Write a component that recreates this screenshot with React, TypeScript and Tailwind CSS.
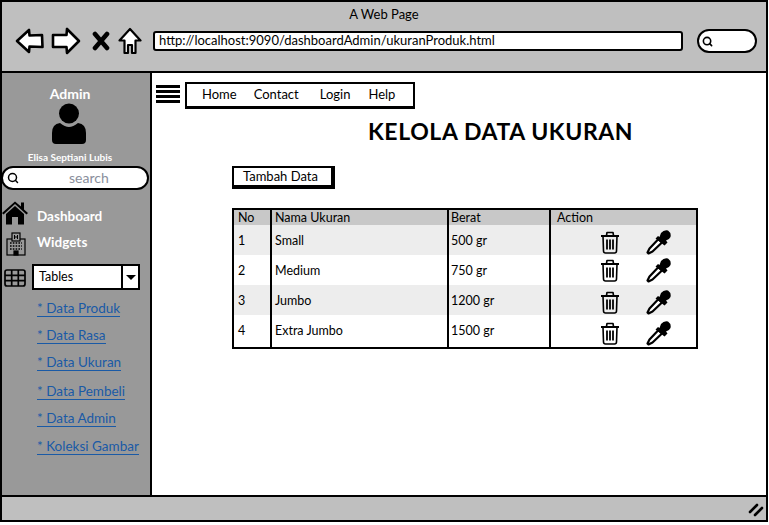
import { Search } from "lucide-react";

const font = { fontFamily: '"Lato", "Noto Sans", sans-serif' };

const rows = [
  { no: "1", name: "Small", weight: "500 gr", iconPad: "pt-[4px]" },
  { no: "2", name: "Medium", weight: "750 gr", iconPad: "pt-0" },
  { no: "3", name: "Jumbo", weight: "1200 gr", iconPad: "pt-[3px]" },
  { no: "4", name: "Extra Jumbo", weight: "1500 gr", iconPad: "pt-[6px]" },
];

const links = [
  { label: "* Data Produk", className: "mt-[10px]" },
  { label: "* Data Rasa", className: "mt-[10px]" },
  { label: "* Data Ukuran", className: "mt-[10px]" },
  { label: "* Data Pembeli", className: "mt-[12px]" },
  { label: "* Data Admin", className: "mt-[10px]" },
  { label: "* Koleksi Gambar", className: "mt-[11px]" },
];

function BackIcon() {
  return (
    <svg width="30" height="26" viewBox="0 0 30 26" fill="white" stroke="black" strokeWidth="2.6" strokeLinejoin="round">
      <path d="M2 13 L14 2 L14.500 7.500 L27 7 L27.500 19 L14.500 18.500 L14 24 Z" />
    </svg>
  );
}

function ForwardIcon() {
  return (
    <svg width="30" height="28" viewBox="0 0 30 28" fill="white" stroke="black" strokeWidth="2.600" strokeLinejoin="round">
      <path d="M28 14 L16 2 L15.500 8 L2 8 L2 20 L15.500 20 L16 26 Z" />
    </svg>
  );
}

function StopIcon() {
  return (
    <svg width="18" height="20" viewBox="0 0 18 20" fill="none" stroke="black" strokeWidth="4.600" strokeLinecap="round">
      <path d="M3 3 L15 17 M15 3 L3 17" />
    </svg>
  );
}

function HomeOutline() {
  return (
    <svg width="24" height="28" viewBox="0 0 24 28" fill="white" stroke="black" strokeWidth="2.200" strokeLinejoin="round">
      <path d="M12 2 L22.500 13.500 L17.500 13.500 L17.500 26 L14 26 L14 18 L10 18 L10 26 L6.500 26 L6.500 13.500 L1.500 13.500 Z" />
    </svg>
  );
}

function HomeSolid() {
  return (
    <svg width="26" height="24" viewBox="0 0 26 24" fill="black">
      <path d="M13 3 L1.500 13.500 L0 12 L13 0.500 L19 5.500 L19 1.500 L22 1.500 L22 8.500 L26 12 L24.500 13.500 Z" />
      <path d="M13 5 L4 13 L4 23.500 L10 23.500 L10 16 L16 16 L16 23.500 L22 23.500 L22 13 Z" />
    </svg>
  );
}

function HospitalIcon() {
  return (
    <svg width="20" height="24" viewBox="0 0 20 24" fill="none" stroke="black" strokeWidth="1.200">
      <rect x="1" y="7" width="18" height="16" />
      <rect x="6" y="1" width="8" height="8" fill="#999999" />
      <path d="M8.500 3 V7 M11.500 3 V7 M8.500 5 H11.500" strokeWidth="1" />
      <path d="M4 11 H16 M4 14 H16 M4 17 H16" strokeWidth="1.600" strokeDasharray="1.600 1.200" />
      <rect x="8" y="19" width="4" height="4" fill="black" />
    </svg>
  );
}

function GridIcon() {
  return (
    <svg width="22" height="18" viewBox="0 0 22 18" fill="none" stroke="black" strokeWidth="1.700">
      <rect x="1" y="1" width="20" height="16" rx="2" />
      <path d="M1 6.300 H21 M1 11.700 H21 M7.700 1 V17 M14.300 1 V17" />
    </svg>
  );
}

function TrashIcon() {
  return (
    <svg width="20" height="23" viewBox="0 0 20 23" fill="none" stroke="black" strokeWidth="1.600" strokeLinejoin="round">
      <path d="M1 5 H19" strokeWidth="2" />
      <path d="M6.500 4.500 L7 1.500 H13 L13.500 4.500" />
      <path d="M3 5 L3.500 20 Q3.600 22 5.500 22 H14.500 Q16.400 22 16.500 20 L17 5" />
      <path d="M7 8.500 V18.500 M10 8.500 V18.500 M13 8.500 V18.500" strokeWidth="1.800" />
    </svg>
  );
}

function DropperIcon() {
  return (
    <svg width="25" height="25" viewBox="0 0 25 25">
      <path d="M12.500 9 L16 12.500 L6.500 21.500 L2.500 23.500 L1.500 22.500 L3.500 18.500 Z" fill="white" stroke="black" strokeWidth="2.200" strokeLinejoin="round" />
      <path d="M9.500 8.500 L12 6 L13.500 7 L15 3 Q18 -0.500 22 0.500 Q25.500 3 24.500 7 Q23 10 20 10.500 L21.500 12.500 L18.500 15.500 Z" fill="black" />
    </svg>
  );
}

function Avatar() {
  return (
    <svg width="36" height="42" viewBox="0 0 36 42" fill="black">
      <circle cx="18" cy="10.500" r="10" />
      <path d="M9 20 Q14 24 18 24 Q22 24 27 20 Q35 21 35 30 L35 37 Q35 41 31 41 L5 41 Q1 41 1 37 L1 30 Q1 21 9 20 Z" />
    </svg>
  );
}

function Sidebar() {
  return (
    <aside className="flex w-[150px] shrink-0 flex-col border-r-[2px] border-black bg-[#999999]">
      <div className="mt-[12px] pr-[12px] text-center text-[14px] leading-[18px] font-bold text-white">Admin</div>
      <div className="flex justify-center pr-[14px]">
        <Avatar />
      </div>
      <div className="mt-[6px] pr-[12px] text-center text-[10px] leading-[12px] font-bold text-white">Elisa Septiani Lubis</div>
      <div className="-ml-[1px] mt-[3px] flex h-[24px] w-[148px] items-center rounded-full border-[2px] border-black bg-white">
        <Search size={12} strokeWidth={3} className="ml-[4px] text-black" />
        <span className="ml-[50px] text-[14px] leading-none text-[#8a8f9c]">search</span>
      </div>
      <div className="mt-[14px] flex h-[24px] items-center">
        <span className="mb-[7px] flex">
          <HomeSolid />
        </span>
        <span className="ml-[9px] text-[13.500px] font-bold text-white">Dashboard</span>
      </div>
      <div className="mt-[2px] flex h-[24px] items-center">
        <span className="ml-[4px] mt-[3px] flex">
          <HospitalIcon />
        </span>
        <span className="ml-[11px] text-[13.500px] font-bold text-white">Widgets</span>
      </div>
      <div className="mt-[10px] flex items-center">
        <span className="ml-[2px] mt-[2px] flex">
          <GridIcon />
        </span>
        <div className="ml-[6px] flex h-[26px] w-[108px] items-center border-[2px] border-black bg-white pl-[5px] text-[12.500px] text-black">
          <span className="flex-1">Tables</span>
          <span className="flex h-full w-[17px] items-center justify-center border-l-[2px] border-black">
            <span className="h-0 w-0 border-x-[5px] border-t-[5px] border-x-transparent border-t-black" />
          </span>
        </div>
      </div>
      <div className="flex flex-col items-start pl-[35px]">
        {links.map((link) => (
          <a key={link.label} className={`${link.className} border-b border-[#1a5aa6] text-[13.500px] leading-[16px] text-[#1a5aa6]`}>
            {link.label}
          </a>
        ))}
      </div>
    </aside>
  );
}

function DataTable() {
  return (
    <div className="ml-[80px] mt-[19px] w-[466px] border-[2px] border-black text-[12.500px] text-black">
      <div className="grid h-[15px] grid-cols-[38px_177px_102px_1fr] bg-[#c8c8c8] leading-[15px]">
        <div className="border-r-[2px] border-black pl-[4px]">No</div>
        <div className="border-r-[2px] border-black pl-[3px]">Nama Ukuran</div>
        <div className="border-r-[2px] border-black pl-[2px]">Berat</div>
        <div className="pl-[6px]">Action</div>
      </div>
      {rows.map((row, i) => (
        <div key={row.no} className={`grid h-[30px] grid-cols-[38px_177px_102px_1fr] ${i % 2 === 0 ? "bg-[#ededed]" : "bg-white"}`}>
          <div className="border-r-[2px] border-black pl-[4px] leading-[31px]">{row.no}</div>
          <div className="border-r-[2px] border-black pl-[3px] leading-[31px]">{row.name}</div>
          <div className="border-r-[2px] border-black pl-[2px] leading-[31px]">{row.weight}</div>
          <div className={`flex items-center pl-[49px] ${row.iconPad}`}>
            <TrashIcon />
            <span className="ml-[26px] flex">
              <DropperIcon />
            </span>
          </div>
        </div>
      ))}
      <div className="grid h-[2px] grid-cols-[38px_177px_102px_1fr]">
        <div className="border-r-[2px] border-black" />
        <div className="border-r-[2px] border-black" />
        <div className="border-r-[2px] border-black" />
      </div>
    </div>
  );
}

export default function App() {
  return (
    <div className="h-[525px] w-[769px] overflow-hidden bg-white text-black" style={font}>
      <div className="flex h-[522px] w-[768px] flex-col border-[2px] border-black">
        <header className="h-[71px] shrink-0 border-b-[2px] border-black bg-[#bfbfbf]">
          <div className="h-[22px] pt-[3px] text-center text-[13px] leading-[18px]">A Web Page</div>
          <div className="mt-[1px] flex h-[32px] items-center">
            <span className="ml-[13px] flex">
              <BackIcon />
            </span>
            <span className="ml-[6px] flex">
              <ForwardIcon />
            </span>
            <span className="ml-[11px] flex">
              <StopIcon />
            </span>
            <span className="ml-[8px] flex">
              <HomeOutline />
            </span>
            <div className="ml-[11px] flex h-[20px] w-[530px] items-center rounded-[3px] border-[2px] border-black bg-white pl-[4px] text-[13px]">
              http://localhost:9090/dashboardAdmin/ukuranProduk.html
            </div>
            <div className="ml-[14px] flex h-[24px] w-[60px] items-center rounded-full border-[2px] border-black bg-white">
              <Search size={11} strokeWidth={3.500} className="ml-[3px] text-black" />
            </div>
          </div>
        </header>
        <div className="flex min-h-0 flex-1">
          <Sidebar />
          <main className="min-w-0 flex-1 bg-white">
            <div className="ml-[4px] mt-[9px] flex items-start">
              <div className="mt-[3px] flex w-[24px] flex-col gap-[2px]">
                <span className="h-[3px] bg-black" />
                <span className="h-[3px] bg-black" />
                <span className="h-[3px] bg-black" />
                <span className="h-[3px] bg-black" />
              </div>
              <nav className="ml-[5px] flex h-[27px] w-[230px] items-center border-[2px] border-b-[3px] border-black pl-[15px] text-[13px]">
                <span>Home</span>
                <span className="ml-[17px]">Contact</span>
                <span className="ml-[21px]">Login</span>
                <span className="ml-[18px]">Help</span>
              </nav>
            </div>
            <h1 className="ml-[216px] mt-[7px] text-[23px] leading-[30px] font-bold tracking-[0.6px]">KELOLA DATA UKURAN</h1>
            <div className="ml-[80px] mt-[20px] flex h-[23px] w-[103px] items-center border-[2px] border-r-[4px] border-b-[4px] border-black pl-[9px] text-[13px]">
              Tambah Data
            </div>
            <DataTable />
          </main>
        </div>
        <footer className="relative h-[25px] shrink-0 border-t-[2px] border-black bg-[#bfbfbf]">
          <svg className="absolute right-[2px] top-[6px]" width="16" height="14" viewBox="0 0 16 14" fill="none" stroke="black" strokeWidth="2.600" strokeLinecap="round">
            <path d="M2 9 L9 2 M7 12 L14 5" />
          </svg>
        </footer>
      </div>
    </div>
  );
}
